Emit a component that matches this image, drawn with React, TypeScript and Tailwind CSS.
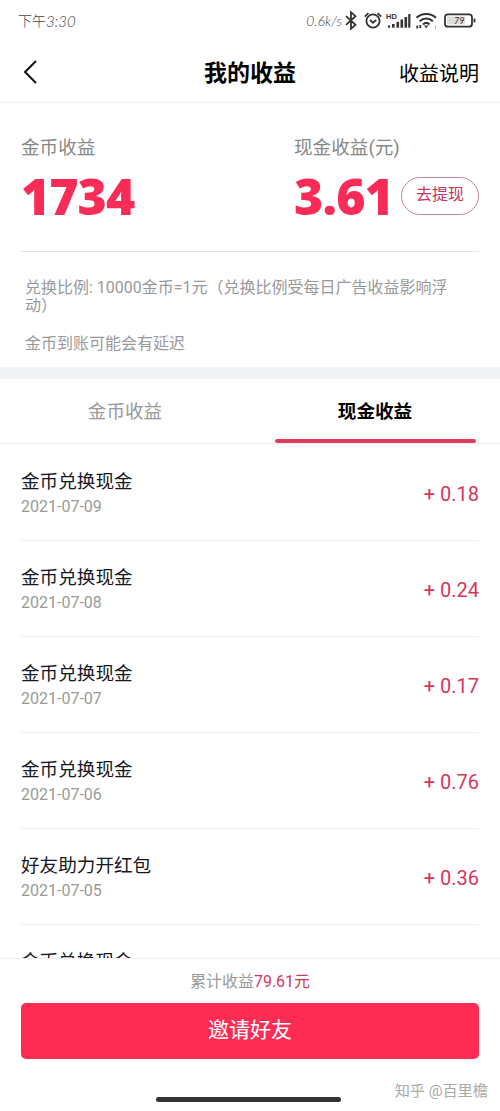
import React from "react";

const records = [
  { title: "金币兑换现金", date: "2021-07-09", amount: "0.18" },
  { title: "金币兑换现金", date: "2021-07-08", amount: "0.24" },
  { title: "金币兑换现金", date: "2021-07-07", amount: "0.17" },
  { title: "金币兑换现金", date: "2021-07-06", amount: "0.76" },
  { title: "好友助力开红包", date: "2021-07-05", amount: "0.36" },
  { title: "金币兑换现金", date: "2021-07-04", amount: "0.21" },
];

function StatusIcons() {
  return (
    <svg width="132" height="24" viewBox="0 0 132 24" fill="none" stroke="#333" strokeWidth="1.8">
      {/* bluetooth */}
      <path d="m1 7.200 9.500 8.600-4.500 4V3.200l4.500 4L1 15.800" />
      {/* alarm */}
      <circle cx="28" cy="12" r="6.600" />
      <path d="m25 11 3 2.800 3.200-2.800M19.800 7.700l3.600-3.600M36.200 7.700l-3.600-3.600" />
      {/* signal */}
      <g fill="#333" stroke="none">
        <rect x="43" y="16.500" width="2.200" height="2.200" />
        <rect x="47" y="15" width="2.600" height="3.700" />
        <rect x="51.500" y="12.800" width="2.600" height="5.900" />
        <rect x="55.500" y="10.500" width="2.600" height="8.200" />
        <rect x="59.500" y="8" width="2.600" height="10.700" />
        <rect x="63.200" y="5" width="2.200" height="13.700" />
        <text x="41" y="9.500" fontSize="7.5" fontWeight="700" fontFamily="Liberation Sans, sans-serif">HD</text>
      </g>
      {/* wifi */}
      <path d="M71.500 8.800c5.500-5 14-5 19.500 0M74.700 12.200c3.800-3.600 9.300-3.600 13.100 0M78 15.500c2-1.900 4.500-1.900 6.500 0" strokeWidth="2.100" />
      <path d="M79 16.500h4.400l-2.200 2.800z" fill="#333" stroke="none" />
      <path d="M72.300 19.500v-3M75.300 16v3" strokeWidth="1.800" />
      <path d="M90.500 16v4" stroke="#bbb" strokeWidth="1" />
      {/* battery */}
      <rect x="100" y="5.300" width="27" height="12.400" rx="3" />
      <rect x="102" y="7.500" width="18" height="8" fill="#ddd" stroke="none" />
      <path d="M129.500 9.500v4" />
      <text x="109" y="15" fontSize="9" fontStyle="italic" fill="#333" stroke="none" fontFamily="Lato, sans-serif">79</text>
    </svg>
  );
}

function StatusBar() {
  return (
    <div className="flex h-[42px] shrink-0 items-center justify-between pl-[18px] pr-[23px] text-[#444]">
      <div className="flex items-center pb-px text-[14px] font-light leading-5">
        下午<span className="font-[Lato] text-[15px] italic">3:30</span>
      </div>
      <div className="flex items-center">
        <span className="mr-[3px] pb-px font-[Lato] text-[14px] font-light italic">0.6k/s</span>
        <StatusIcons />
      </div>
    </div>
  );
}

function Header() {
  return (
    <div className="grid h-[61px] shrink-0 grid-cols-3 items-center border-b border-[#eee] px-[21px] text-black">
      <svg width="18" height="24" viewBox="0 0 18 24" fill="none" stroke="#111" strokeWidth="2" strokeLinecap="round">
        <path d="M14.500 1.500 4 12l10.500 10.500" />
      </svg>
      <h1 className="pt-[3px] text-center text-[23px] font-bold leading-[30px]">我的收益</h1>
      <span className="pt-[3px] text-right text-[20px] leading-[30px]">收益说明</span>
    </div>
  );
}

function Summary() {
  return (
    <div className="h-[264px] shrink-0 px-[21px] pt-[31px] text-[#888]">
      <div className="flex h-[118px] border-b border-[#e5e5e5]">
        <div className="w-[273px]">
          <div className="text-[18.6px] leading-7">金币收益</div>
          <div className="mt-[9px] font-['Open_Sans'] text-[50px] font-extrabold leading-[50px] tracking-[-1px] text-[#f92c58]">1734</div>
        </div>
        <div className="flex-1">
          <div className="text-[18.6px] leading-7">现金收益(元)</div>
          <div className="mt-[9px] flex items-center justify-between">
            <span className="font-['Open_Sans'] text-[50px] font-extrabold leading-[50px] tracking-[-0.8px] text-[#f92c58]">3.61</span>
            <button className="h-[38px] w-[78px] rounded-full border border-[#c9899a] pb-[2px] text-[16px] text-[#c43561]">去提现</button>
          </div>
        </div>
      </div>
      <div className="pl-1 pt-[27px] text-[16px] leading-[18px] text-[#999]">
        <p className="w-[430px]">兑换比例: 10000金币=1元（兑换比例受每日广告收益影响浮动）</p>
        <p className="mt-5">金币到账可能会有延迟</p>
      </div>
    </div>
  );
}

function Tabs() {
  return (
    <div className="flex h-[65px] shrink-0 border-b border-[#f0f0f0] text-[18.6px]">
      <div className="flex w-1/2 justify-center pt-[19px] leading-7 text-[#999]">金币收益</div>
      <div className="flex w-1/2 flex-col items-center justify-between pt-[19px] font-bold text-black">
        <span className="leading-7">现金收益</span>
        <div className="h-1 w-[201px] rounded-full bg-[#e43a5d]" />
      </div>
    </div>
  );
}

export default function App() {
  return (
    <div className="flex h-[1111px] w-[500px] flex-col overflow-hidden bg-white font-[Roboto,'Noto_Sans_CJK_SC',sans-serif]">
      <StatusBar />
      <Header />
      <Summary />
      <div className="h-3 shrink-0 bg-[#f1f3f6]" />
      <Tabs />

      {/* income list */}
      <div className="h-[514px] shrink-0 overflow-hidden px-[21px] pt-px">
        {records.map((item) => (
          <div key={item.date} className="flex h-24 items-center justify-between border-b border-[#eee]">
            <div>
              <div className="text-[18.6px] leading-7 text-[#161823]">{item.title}</div>
              <div className="pb-px text-[16px] leading-[21px] text-[#999]">{item.date}</div>
            </div>
            <span className="pt-[3px] text-[20px] text-[#d5365c]">+ {item.amount}</span>
          </div>
        ))}
      </div>

      {/* footer */}
      <div className="relative flex-1 border-t border-[#eee] bg-white px-[21px] pt-[12px]">
        <div className="text-center text-[16px] leading-[22px] text-[#999]">
          累计收益<span className="text-[#d5365c]">79.61元</span>
        </div>
        <button className="mt-[10px] h-14 w-full rounded-[5px] bg-[#fe2c55] text-[21px] text-white">邀请好友</button>
        <div className="ml-[135px] mt-[38px] h-[5px] w-[185px] rounded-full bg-[#333]" />
        <span className="absolute bottom-[9px] right-3 text-[15.2px] leading-[22px] text-[#aaa]">知乎 @百里檐</span>
      </div>
    </div>
  );
}
